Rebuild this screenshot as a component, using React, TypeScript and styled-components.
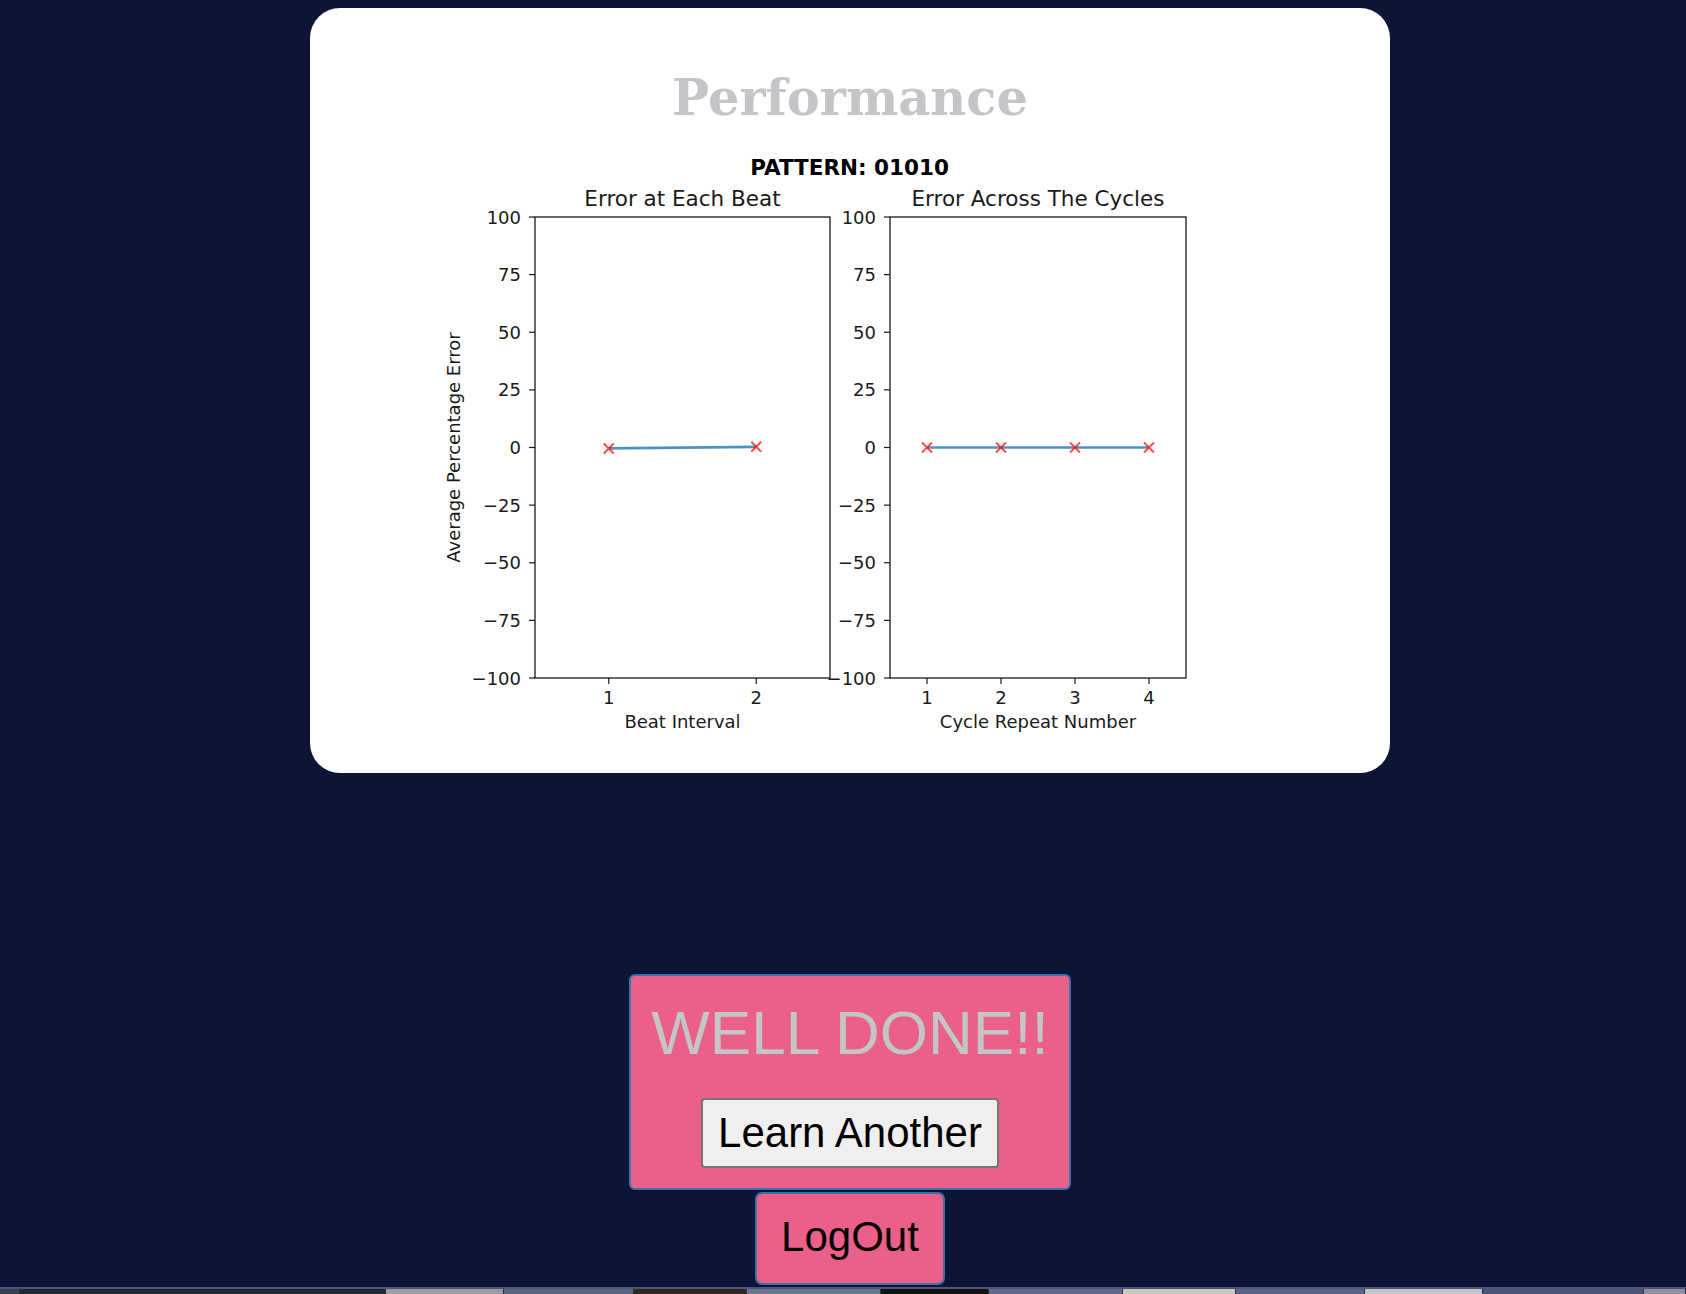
import React from "react";
import styled, { createGlobalStyle } from "styled-components";

const GlobalStyle = createGlobalStyle`
  html, body {
    margin: 0;
    padding: 0;
    background: #0d1537;
  }
  #root {
    min-height: 100vh;
  }
`;

const Page = styled.div`
  min-height: 100vh;
  box-sizing: border-box;
  display: flex;
  flex-direction: column;
  align-items: center;
  padding: 8px 0 0 14px;
  background: #0d1537;
`;

const Card = styled.section`
  width: 1080px;
  height: 765px;
  box-sizing: border-box;
  background: #ffffff;
  border-radius: 30px;
  display: flex;
  flex-direction: column;
  align-items: center;
  padding-top: 62px;
`;

const Heading = styled.h1`
  margin: 0 0 19px;
  font-family: "DejaVu Serif", "Liberation Serif", serif;
  font-weight: 700;
  font-size: 49.5px;
  height: 56px;
  line-height: 56px;
  color: #c4c5c8;
`;

const ChartSvg = styled.svg`
  display: block;
  width: 840px;
  height: 600px;
  font-family: "DejaVu Sans", sans-serif;
`;

const DoneBox = styled.div`
  margin-top: 201px;
  width: 442px;
  box-sizing: border-box;
  background: #ea6088;
  border: 2px solid #3d6fa8;
  border-radius: 6px;
  display: flex;
  flex-direction: column;
  align-items: center;
  padding: 21px 20px 20px;
`;

const DoneTitle = styled.h2`
  margin: 0 0 30px;
  font-family: "Liberation Sans", Arial, sans-serif;
  font-weight: 400;
  font-size: 62px;
  line-height: normal;
  color: #c4c5c9;
`;

const LearnButton = styled.button`
  font-family: "Liberation Sans", Arial, sans-serif;
  font-size: 42px;
  line-height: normal;
  color: #000;
  background: #efefef;
  border: 2px solid #767676;
  border-radius: 4px;
  padding: 9px 15px;
  width: 298px;
  cursor: pointer;
`;

const LogOutButton = styled.button`
  margin-top: 2px;
  font-family: "Liberation Sans", Arial, sans-serif;
  font-size: 42px;
  line-height: normal;
  color: #000;
  background: #ea6088;
  border: 2px solid #3d6fa8;
  border-radius: 7px;
  padding: 19px 24px 22px;
  cursor: pointer;
`;

const Footer = styled.div`
  margin-top: auto;
  margin-left: -14px;
  width: 1686px;
  height: 7px;
  display: flex;
  flex-direction: column;
`;

const FooterLine = styled.div`
  height: 2px;
  background: #4c5577;
`;

const Thumbs = styled.div`
  flex: 1;
  display: flex;
`;

const Thumb = styled.div<{ $grow: number; $color: string }>`
  flex: ${(p) => p.$grow} 0 0;
  background: ${(p) => p.$color};
  border-right: 1px solid #2a3045;
`;

const thumbs: [number, string][] = [
  [18, "#3a4050"],
  [342, "#1d2a35"],
  [110, "#9c9c9c"],
  [120, "#5a6580"],
  [105, "#302820"],
  [125, "#6a7590"],
  [100, "#111111"],
  [125, "#606a88"],
  [105, "#c8c8c0"],
  [120, "#5a6585"],
  [110, "#c0c4c8"],
  [150, "#4a5575"],
  [38, "#9090a0"],
];

const Y_TICKS = [100, 75, 50, 25, 0, -25, -50, -75, -100];
const TOP = 72;
const BOTTOM = 533;
const yPos = (v: number) => (TOP + BOTTOM) / 2 - (v * (BOTTOM - TOP)) / 200;
const fmt = (v: number) => (v < 0 ? `\u2212${Math.abs(v)}` : `${v}`);

type AxesProps = {
  x0: number;
  x1: number;
  xmin: number;
  xmax: number;
  ticks: number[];
  data: number[];
  title: string;
  xlabel: string;
};

const Axes: React.FC<AxesProps> = ({ x0, x1, xmin, xmax, ticks, data, title, xlabel }) => {
  const xPos = (v: number) => x0 + ((v - xmin) * (x1 - x0)) / (xmax - xmin);
  const cx = (x0 + x1) / 2;
  const pts = data.map((v, i) => [xPos(i + 1), yPos(v)] as [number, number]);
  return (
    <g>
      <text x={cx} y={61} fontSize={21.5} textAnchor="middle" fill="#1a1a1a">
        {title}
      </text>
      <rect x={x0} y={TOP} width={x1 - x0} height={BOTTOM - TOP} fill="none" stroke="#1a1a1a" strokeWidth={1.3} />
      {Y_TICKS.map((t) => (
        <g key={t}>
          <line x1={x0 - 6} x2={x0} y1={yPos(t)} y2={yPos(t)} stroke="#1a1a1a" strokeWidth={1.2} />
          <text x={x0 - 14} y={yPos(t) + 6.5} fontSize={18} textAnchor="end" fill="#1a1a1a">
            {fmt(t)}
          </text>
        </g>
      ))}
      {ticks.map((t) => (
        <g key={t}>
          <line x1={xPos(t)} x2={xPos(t)} y1={BOTTOM} y2={BOTTOM + 6} stroke="#1a1a1a" strokeWidth={1.2} />
          <text x={xPos(t)} y={559} fontSize={18} textAnchor="middle" fill="#1a1a1a">
            {t}
          </text>
        </g>
      ))}
      <text x={cx} y={583} fontSize={18} textAnchor="middle" fill="#1a1a1a">
        {xlabel}
      </text>
      <polyline
        points={pts.map((p) => p.join(",")).join(" ")}
        fill="none"
        stroke="#1f77b4"
        strokeOpacity={0.8}
        strokeWidth={2.7}
      />
      {pts.map(([x, y], i) => (
        <path
          key={i}
          d={`M${x - 5} ${y - 5} L${x + 5} ${y + 5} M${x - 5} ${y + 5} L${x + 5} ${y - 5}`}
          stroke="#ff0000"
          strokeOpacity={0.7}
          strokeWidth={2}
        />
      ))}
    </g>
  );
};

const PerformanceChart: React.FC = () => (
  <ChartSvg viewBox="0 0 840 600">
    <text x={419.5} y={30} fontSize={21.5} fontWeight={700} textAnchor="middle" fill="#000">
      PATTERN: 01010
    </text>
    <text
      transform="translate(30 302.5) rotate(-90)"
      fontSize={18}
      textAnchor="middle"
      fill="#1a1a1a"
    >
      Average Percentage Error
    </text>
    <Axes
      x0={105}
      x1={400}
      xmin={0.5}
      xmax={2.5}
      ticks={[1, 2]}
      data={[-0.4, 0.3]}
      title="Error at Each Beat"
      xlabel="Beat Interval"
    />
    <Axes
      x0={460}
      x1={756}
      xmin={0.5}
      xmax={4.5}
      ticks={[1, 2, 3, 4]}
      data={[0, 0, 0, 0]}
      title="Error Across The Cycles"
      xlabel="Cycle Repeat Number"
    />
  </ChartSvg>
);

export default function App() {
  return (
    <>
      <GlobalStyle />
      <Page>
        <Card>
          <Heading>Performance</Heading>
          <PerformanceChart />
        </Card>
        <DoneBox>
          <DoneTitle>WELL DONE!!</DoneTitle>
          <LearnButton>Learn Another</LearnButton>
        </DoneBox>
        <LogOutButton>LogOut</LogOutButton>
        <Footer>
          <FooterLine />
          <Thumbs>
            {thumbs.map(([g, c], i) => (
              <Thumb key={i} $grow={g} $color={c} />
            ))}
          </Thumbs>
        </Footer>
      </Page>
    </>
  );
}
